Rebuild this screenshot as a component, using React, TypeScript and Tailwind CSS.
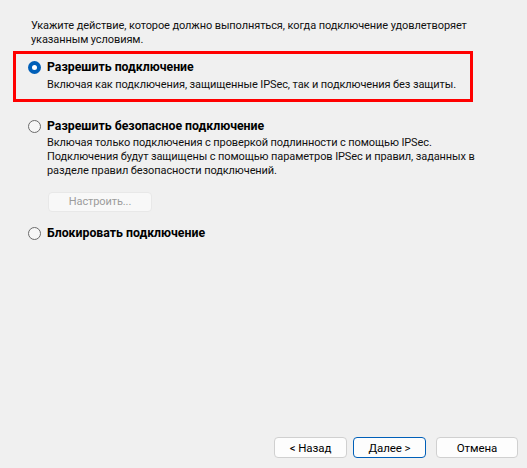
import React from "react";

const font = { fontFamily: 'Roboto, "Noto Sans", sans-serif' };

function Radio({ checked }: { checked?: boolean }) {
  return checked ? (
    <span className="flex h-[13px] w-[13px] shrink-0 items-center justify-center rounded-full bg-[#005fb8]">
      <span className="h-[5px] w-[5px] rounded-full bg-white" />
    </span>
  ) : (
    <span className="h-[13px] w-[13px] shrink-0 rounded-full border border-[#6b6b6b] bg-[#f7f7f7]" />
  );
}

function Option({ label, checked }: { label: string; checked?: boolean }) {
  return (
    <div className="flex h-[16px] items-center gap-[6px]">
      <Radio checked={checked} />
      <span className="text-[12.3px] font-bold leading-[16px] tracking-normal text-black">{label}</span>
    </div>
  );
}

export default function App() {
  return (
    <div
      className="flex h-[468px] w-[527px] flex-col whitespace-nowrap bg-[#f0f0f0] text-[11px] leading-[14px] tracking-[-0.1px] text-[#111]"
      style={font}
    >
      <p className="pl-[31px] pt-[19px]">
        Укажите действие, которое должно выполняться, когда подключение удовлетворяет
        <br />
        указанным условиям.
      </p>

      <div className="ml-[13px] mt-[4px] w-[460px] border-[3px] border-[#ff0000] pb-[7px] pl-[12px] pt-[5px]">
        <Option label="Разрешить подключение" checked />
        <p className="mt-[3px] pl-[19px]">
          Включая как подключения, защищенные IPSec, так и подключения без защиты.
        </p>
      </div>

      <div className="mt-[16px] pl-[28px]">
        <Option label="Разрешить безопасное подключение" />
        <p className="mt-[2px] pl-[19px]">
          Включая только подключения с проверкой подлинности с помощью IPSec.
          <br />
          Подключения будут защищены с помощью параметров IPSec и правил, заданных в
          <br />
          разделе правил безопасности подключений.
        </p>
        <button
          disabled
          className="ml-[20px] mt-[14px] flex h-[20px] w-[104px] items-center justify-center rounded-[4px] border border-[#e8e8e8] bg-[#f8f8f8] text-[11px] text-[#9c9c9c]"
        >
          Настроить...
        </button>
        <div className="mt-[13px]">
          <Option label="Блокировать подключение" />
        </div>
      </div>

      <div className="mb-[10px] mt-auto flex justify-end pr-[9px]">
        <button className="flex h-[21px] w-[73px] items-center justify-center rounded-[4px] border border-[#d0d0d0] bg-[#fdfdfd] text-[11.5px] text-black">
          &lt; Назад
        </button>
        <button className="ml-[6px] flex h-[21px] w-[73px] items-center justify-center rounded-[4px] border border-[#005fb8] bg-[#fdfdfd] text-[11.5px] text-black">
          Далее &gt;
        </button>
        <button className="ml-[10px] flex h-[21px] w-[82px] items-center justify-center rounded-[4px] border border-[#d0d0d0] bg-[#fdfdfd] text-[11.5px] text-black">
          Отмена
        </button>
      </div>
    </div>
  );
}
